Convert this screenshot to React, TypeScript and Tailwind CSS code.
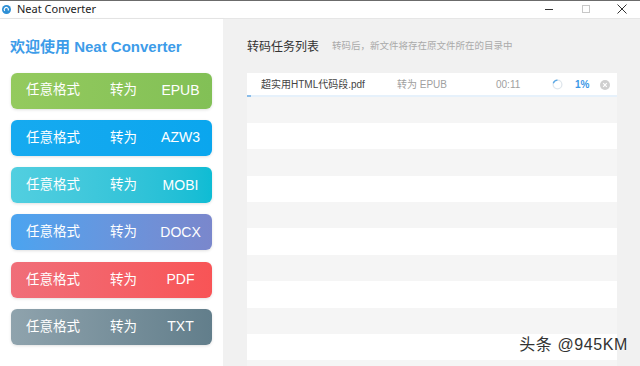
import React from 'react';

const formats = [
  { name: 'EPUB', bg: 'bg-gradient-to-r from-[#94ca5e] to-[#82c056]' },
  { name: 'AZW3', bg: 'bg-gradient-to-r from-[#16aaf0] to-[#0aa6ee]' },
  { name: 'MOBI', bg: 'bg-gradient-to-r from-[#52cfe0] to-[#0ebcd4]' },
  { name: 'DOCX', bg: 'bg-gradient-to-r from-[#4aa4f0] to-[#7a87cc]' },
  { name: 'PDF', bg: 'bg-gradient-to-r from-[#f06e79] to-[#f85456]' },
  { name: 'TXT', bg: 'bg-gradient-to-r from-[#8fa3ad] to-[#627e8b]' },
];

const font = { fontFamily: '"Liberation Sans", "Noto Sans CJK SC", sans-serif' };

const TitleBar = () => (
  <div className="h-[21px] border-t border-[#6b6b6b] border-b border-b-[#e6e6e6] bg-white flex items-center">
    <svg className="ml-[2px]" width="9" height="9" viewBox="0 0 10 10">
      <circle cx="5" cy="5" r="5" fill="#2d8fd5" />
      <path d="M3 6.5 A2.3 2.3 0 1 1 6.8 6.2" stroke="#fff" strokeWidth="1.3" fill="none" />
    </svg>
    <span className="ml-[6px] text-[11px] text-[#222]" style={{ fontFamily: '"Noto Sans", sans-serif' }}>
      Neat Converter
    </span>
    <div className="ml-auto flex items-center h-full">
      <div className="w-[38px] flex justify-center">
        <div className="w-[8px] h-px bg-[#333]" />
      </div>
      <div className="w-[36px] flex justify-center">
        <div className="w-[8px] h-[8px] border border-[#c8c8c8]" />
      </div>
      <div className="w-[36px] flex justify-center">
        <svg width="10" height="10" viewBox="0 0 10 10">
          <path d="M0.5 0.5 L9.5 9.5 M9.5 0.5 L0.5 9.5" stroke="#333" strokeWidth="1" />
        </svg>
      </div>
    </div>
  </div>
);

const LeftPanel = () => (
  <div className="w-[223px] bg-white pt-[18px] shadow-[1px_0_3px_rgba(0,0,0,0.04)]">
    <h1 className="ml-[10px] h-[20px] leading-[20px] text-[15px] font-bold text-[#3d9ce9]">
      欢迎使用 Neat Converter
    </h1>
    <div className="mt-[16px] ml-[11px] flex flex-col gap-[11.3px]">
      {formats.map((f) => (
        <div
          key={f.name}
          className={`${f.bg} w-[201px] h-[36px] rounded-[6px] flex items-center text-white text-[13.5px] shadow-[0_1px_3px_rgba(0,0,0,0.12)]`}
        >
          <span className="ml-[15px] w-[84px]">任意格式</span>
          <span className="w-[42px]">转为</span>
          <span className="w-[57px] text-center text-[14px]">{f.name}</span>
        </div>
      ))}
    </div>
  </div>
);

const TaskRow = () => (
  <div className="relative h-[24px] bg-white flex items-center text-[10px]">
    <span className="ml-[14px] w-[136px] text-[#444]">超实用HTML代码段.pdf</span>
    <span className="w-[99px] text-[#a0a0a0]">转为 EPUB</span>
    <span className="w-[56px] text-[#a0a0a0]">00:11</span>
    <svg width="11" height="11" viewBox="0 0 12 12">
      <circle cx="6" cy="6" r="4.8" stroke="#dfe6ec" strokeWidth="1.4" fill="none" />
      <path d="M6 1.2 A4.8 4.8 0 0 0 1.4 4.6" stroke="#5aa8e6" strokeWidth="1.4" fill="none" />
    </svg>
    <span className="ml-[12px] w-[25px] font-bold text-[#3a98e6]">1%</span>
    <svg width="10" height="10" viewBox="0 0 10 10">
      <circle cx="5" cy="5" r="5" fill="#cfcfcf" />
      <path d="M3.2 3.2 L6.8 6.8 M6.8 3.2 L3.2 6.8" stroke="#fff" strokeWidth="1.2" />
    </svg>
    <div className="absolute left-0 right-0 bottom-0 h-[2px] bg-[#e6f1fb]">
      <div className="w-[4px] h-full bg-[#8bbde9]" />
    </div>
  </div>
);

const RightPanel = () => (
  <div className="flex-1 bg-[#f1f1f1] pl-[24px] pt-[18px] overflow-hidden">
    <div className="h-[20px] flex items-center">
      <span className="text-[12px] text-[#333]">转码任务列表</span>
      <span className="ml-[13px] text-[9.5px] text-[#aaa]">转码后，新文件将存在原文件所在的目录中</span>
    </div>
    <div className="mt-[16px] w-[370px]">
      <TaskRow />
      {Array.from({ length: 11 }).map((_, i) => (
        <div key={i} className={`h-[26.4px] ${i % 2 === 0 ? 'bg-[#f5f5f5]' : 'bg-white'}`} />
      ))}
    </div>
  </div>
);

export default function App() {
  return (
    <div className="w-[640px] h-[366px] overflow-hidden flex flex-col relative" style={font}>
      <TitleBar />
      <div className="flex flex-1">
        <LeftPanel />
        <RightPanel />
      </div>
      <div className="absolute right-[12px] bottom-[9px] text-[16px] tracking-[0.6px] text-[#333] [text-shadow:0_0_2px_#fff]">
        头条 @945KM
      </div>
    </div>
  );
}
